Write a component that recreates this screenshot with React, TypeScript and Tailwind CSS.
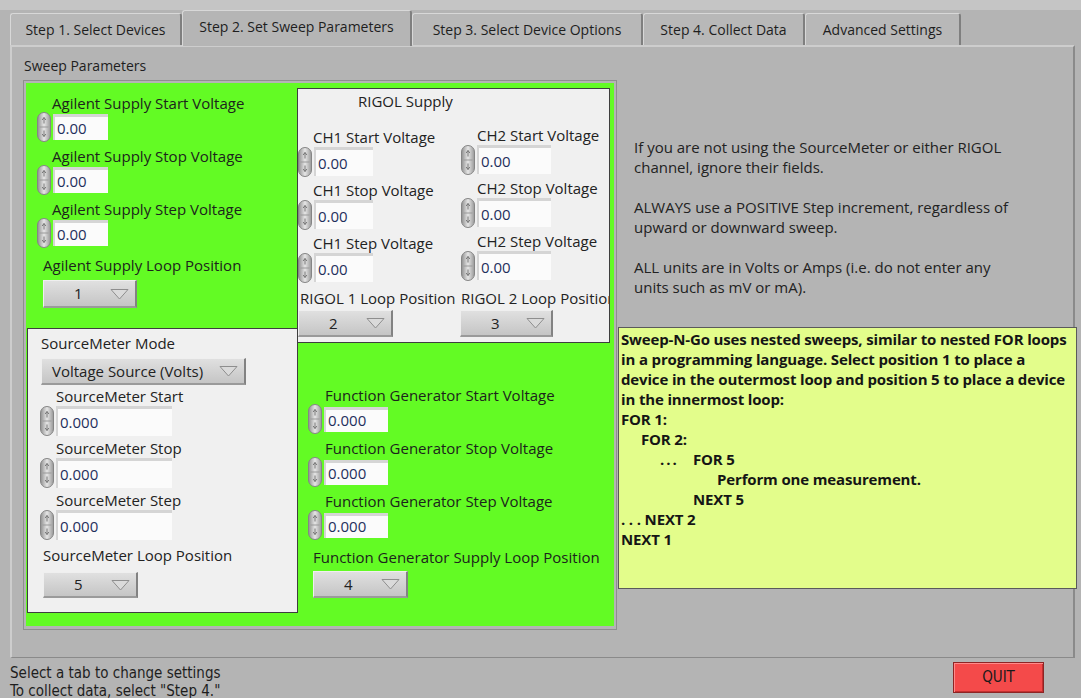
import React from 'react';

// small increment/decrement knob to the left of every numeric control
const Spinner = () => (
  <svg width="14" height="30" viewBox="0 0 14 30" className="shrink-0">
    <defs>
      <linearGradient id="spinFill" x1="0" x2="1" y1="0" y2="0">
        <stop offset="0" stopColor="#8f8f8f" />
        <stop offset="0.5" stopColor="#e6e6e6" />
        <stop offset="1" stopColor="#989898" />
      </linearGradient>
    </defs>
    <rect x="0.5" y="0.5" width="13" height="29" rx="6.5" fill="url(#spinFill)" stroke="#858585" />
    <path d="M2.5 15h9" stroke="#9a9a9a" strokeWidth="1" />
    <path d="M7 5.5v6M5.2 8l1.8-2.5 1.8 2.5" stroke="#6c6c6c" strokeWidth="0.9" fill="none" />
    <path d="M7 18.5v6M5.2 22l1.8 2.5 1.8-2.5" stroke="#6c6c6c" strokeWidth="0.9" fill="none" />
  </svg>
);

const DownArrow = () => (
  <svg width="19" height="12" viewBox="0 0 19 12" className="shrink-0">
    <path d="M1 1.5h17L9.5 11z" fill="#dadada" stroke="#8e8e8e" strokeWidth="1" strokeLinejoin="round" />
  </svg>
);

type FieldProps = {
  label: string;
  value: string;
  labelPad: string;
  row: string;
  box: string;
};

const NumField = ({ label, value, labelPad, row, box }: FieldProps) => (
  <div className="flex flex-col">
    <div className={`h-[18px] leading-[18px] whitespace-nowrap ${labelPad}`}>{label}</div>
    <div className={`flex items-center gap-[2px] ${row}`}>
      <Spinner />
      <div
        className={`flex items-center bg-[#fbfbfb] border-t-[3px] border-l-[2px] border-black/15 pl-[2px] text-[#1f2f5c] ${box}`}
      >
        {value}
      </div>
    </div>
  </div>
);

const Ring = ({ value, className }: { value: string; className: string }) => (
  <div
    className={`flex items-center justify-between pr-[6px] bg-linear-to-b from-[#e0e0e0] to-[#c5c5c5] border-t border-l border-t-[#efefef] border-l-[#efefef] border-r-2 border-b-2 border-r-[#828282] border-b-[#9a9a9a] text-[#222] ${className}`}
  >
    <span>{value}</span>
    <DownArrow />
  </div>
);

const Tab = ({ label, width, active }: { label: string; width: string; active?: boolean }) => (
  <div
    className={`flex items-center justify-center rounded-t-[3px] border-t border-l border-r-2 border-t-[#d8d8d8] border-l-[#d8d8d8] border-r-[#7f7f7f] whitespace-nowrap ${width} ${
      active ? 'h-[36px] -mb-px relative z-10 bg-[#b5b5b5] pb-[4px]' : 'h-[32px] bg-[#b8b8b8]'
    }`}
  >
    {label}
  </div>
);

const agilentBox = 'h-[26px] w-[55px]';
const smBox = 'h-[30px] w-[116px]';
const fgBox = 'h-[25px] w-[64px]';

export default function App() {
  return (
    <div className="w-[1081px] h-[698px] overflow-hidden bg-[#b4b4b4] font-['Open_Sans','Noto_Sans',sans-serif] text-[14px] text-[#1e1e1e] flex flex-col">
      <div className="h-[10px] shrink-0 bg-[#c5c5c5]" />

      {/* tab strip */}
      <div className="flex items-end h-[35px] shrink-0 pl-[10px]">
        <Tab label="Step 1. Select Devices" width="w-[172px]" />
        <Tab label="Step 2. Set Sweep Parameters" width="w-[230px]" active />
        <Tab label="Step 3. Select Device Options" width="w-[231px]" />
        <Tab label="Step 4. Collect Data" width="w-[162px]" />
        <Tab label="Advanced Settings" width="w-[156px]" />
      </div>

      {/* tab page */}
      <div className="ml-[10px] w-[1065px] h-[613px] shrink-0 flex text-[15px] border-t-2 border-l-2 border-r-2 border-b border-t-[#cdcdcd] border-l-[#cdcdcd] border-r-[#8a8a8a] border-b-[#8a8a8a]">
        {/* sweep parameter cluster */}
        <div className="flex flex-col w-[606px] shrink-0">
          <div className="h-[18px] leading-[18px] mt-[10px] ml-[12px] text-[14px]">Sweep Parameters</div>
          <div className="mt-[5px] ml-[11px] w-[594px] h-[550px] border border-[#8e8e8e] pt-[2px] pl-[2px]">
            <div className="flex w-[588px] h-[543px] bg-[#63fb24] text-[#1c241c]">
              {/* left column */}
              <div className="flex flex-col w-[272px] shrink-0">
                {/* Agilent supply */}
                <div className="h-[245px] shrink-0 flex flex-col pl-[11px] pt-[11px]">
                  <div className="flex flex-col gap-[5px]">
                    <NumField label="Agilent Supply Start Voltage" value="0.00" labelPad="pl-[15px]" row="h-[30px]" box={agilentBox} />
                    <NumField label="Agilent Supply Stop Voltage" value="0.00" labelPad="pl-[15px]" row="h-[30px]" box={agilentBox} />
                    <NumField label="Agilent Supply Step Voltage" value="0.00" labelPad="pl-[15px]" row="h-[30px]" box={agilentBox} />
                  </div>
                  <div className="h-[18px] leading-[18px] mt-[8px] ml-[6px]">Agilent Supply Loop Position</div>
                  <Ring value="1" className="mt-[6px] ml-[6px] w-[94px] h-[28px] pl-[30px]" />
                </div>

                {/* SourceMeter */}
                <div className="ml-px h-[285px] shrink-0 bg-[#f0f0f0] border border-[#3e3e3e] flex flex-col pl-[13px] pt-[5px] text-[#222]">
                  <div className="h-[18px] leading-[18px]">SourceMeter Mode</div>
                  <Ring value="Voltage Source (Volts)" className="mt-[6px] w-[205px] h-[27px] pl-[10px]" />
                  <div className="flex flex-col gap-[2px] mt-[2px] -ml-px">
                    <NumField label="SourceMeter Start" value="0.000" labelPad="pl-[16px]" row="h-[32px]" box={smBox} />
                    <NumField label="SourceMeter Stop" value="0.000" labelPad="pl-[16px]" row="h-[32px]" box={smBox} />
                    <NumField label="SourceMeter Step" value="0.000" labelPad="pl-[16px]" row="h-[32px]" box={smBox} />
                  </div>
                  <div className="h-[18px] leading-[18px] mt-[5px] ml-[2px]">SourceMeter Loop Position</div>
                  <Ring value="5" className="mt-[8px] ml-[2px] w-[95px] h-[26px] pl-[30px]" />
                </div>
              </div>

              {/* right column */}
              <div className="flex flex-col w-[316px] shrink-0">
                {/* RIGOL supply */}
                <div className="mt-[5px] -ml-px w-[313px] h-[255px] shrink-0 bg-[#f0f0f0] border border-[#3e3e3e] overflow-hidden flex flex-col pt-[3px] text-[#222]">
                  <div className="h-[18px] leading-[18px] pl-[60px]">RIGOL Supply</div>
                  <div className="flex mt-[18px]">
                    <div className="w-[163px] shrink-0 flex flex-col gap-[4px]">
                      <NumField label="CH1 Start Voltage" value="0.00" labelPad="pl-[15px]" row="h-[31px]" box="h-[29px] w-[59px]" />
                      <NumField label="CH1 Stop Voltage" value="0.00" labelPad="pl-[15px]" row="h-[31px]" box="h-[29px] w-[59px]" />
                      <NumField label="CH1 Step Voltage" value="0.00" labelPad="pl-[15px]" row="h-[31px]" box="h-[29px] w-[59px]" />
                    </div>
                    <div className="flex flex-col gap-[4px] -mt-[2px]">
                      <NumField label="CH2 Start Voltage" value="0.00" labelPad="pl-[16px]" row="h-[31px]" box="h-[29px] w-[74px]" />
                      <NumField label="CH2 Stop Voltage" value="0.00" labelPad="pl-[16px]" row="h-[31px]" box="h-[29px] w-[74px]" />
                      <NumField label="CH2 Step Voltage" value="0.00" labelPad="pl-[16px]" row="h-[31px]" box="h-[29px] w-[74px]" />
                    </div>
                  </div>
                  <div className="flex mt-[6px] whitespace-nowrap">
                    <div className="w-[163px] shrink-0 flex flex-col">
                      <div className="h-[18px] leading-[18px] pl-[2px]">RIGOL 1 Loop Position</div>
                      <Ring value="2" className="mt-[3px] w-[95px] h-[27px] pl-[30px]" />
                    </div>
                    <div className="flex flex-col">
                      <div className="h-[18px] leading-[18px]">RIGOL 2 Loop Position</div>
                      <Ring value="3" className="mt-[3px] -ml-px w-[93px] h-[27px] pl-[30px]" />
                    </div>
                  </div>
                </div>

                {/* function generator */}
                <div className="flex flex-col pl-[10px] mt-[43px]">
                  <div className="flex flex-col gap-[5px]">
                    <NumField label="Function Generator Start Voltage" value="0.000" labelPad="pl-[17px]" row="h-[30px]" box={fgBox} />
                    <NumField label="Function Generator Stop Voltage" value="0.000" labelPad="pl-[17px]" row="h-[30px]" box={fgBox} />
                    <NumField label="Function Generator Step Voltage" value="0.000" labelPad="pl-[17px]" row="h-[30px]" box={fgBox} />
                  </div>
                  <div className="h-[18px] leading-[18px] mt-[8px] ml-[5px] whitespace-nowrap">Function Generator Supply Loop Position</div>
                  <Ring value="4" className="mt-[5px] ml-[5px] w-[95px] h-[27px] pl-[30px]" />
                </div>
              </div>
            </div>
          </div>
        </div>

        {/* notes */}
        <div className="flex flex-col flex-1 min-w-0">
          <div className="mt-[90px] ml-[16px] flex flex-col gap-[20px] leading-[20px] text-[#222]">
            <p>
              If you are not using the SourceMeter or either RIGOL
              <br />
              channel, ignore their fields.
            </p>
            <p>
              ALWAYS use a POSITIVE Step increment, regardless of
              <br />
              upward or downward sweep.
            </p>
            <p>
              ALL units are in Volts or Amps (i.e. do not enter any
              <br />
              units such as mV or mA).
            </p>
          </div>
          <div className="mt-[30px] w-[459px] h-[262px] bg-[#e3fd8b] border border-[#5a5a5a] pl-[2px] pt-px font-bold leading-[20px] tracking-[-0.15px] text-[#151515] whitespace-nowrap overflow-hidden">
            <div>Sweep-N-Go uses nested sweeps, similar to nested FOR loops</div>
            <div>in a programming language. Select position 1 to place a</div>
            <div>device in the outermost loop and position 5 to place a device</div>
            <div>in the innermost loop:</div>
            <div>FOR 1:</div>
            <div className="pl-[20px]">FOR 2:</div>
            <div className="flex">
              <span className="pl-[39px] w-[72px] tracking-[2px]">...</span>
              <span>FOR 5</span>
            </div>
            <div className="pl-[96px]">Perform one measurement.</div>
            <div className="pl-[72px]">NEXT 5</div>
            <div>. . . NEXT 2</div>
            <div>NEXT 1</div>
          </div>
        </div>
      </div>

      {/* status bar */}
      <div className="flex flex-1 justify-between pl-[10px] pr-[37px]">
        <div className="pt-[6px] leading-[18px] text-[15px] font-['Liberation_Sans_Narrow','DejaVu_Sans_Condensed','Liberation_Sans',sans-serif] text-[#1e1e1e]">
          <div>Select a tab to change settings</div>
          <div>To collect data, select "Step 4."</div>
        </div>
        <button className="mt-[4px] w-[91px] h-[31px] bg-[#f44a4a] border border-[#8e2424] shadow-[inset_1px_1px_0_#ff8a8a,inset_-1px_-1px_0_#c23030] font-['Liberation_Sans_Narrow','DejaVu_Sans_Condensed','Liberation_Sans',sans-serif] text-[15px] text-[#1a1a1a]">
          QUIT
        </button>
      </div>
    </div>
  );
}
